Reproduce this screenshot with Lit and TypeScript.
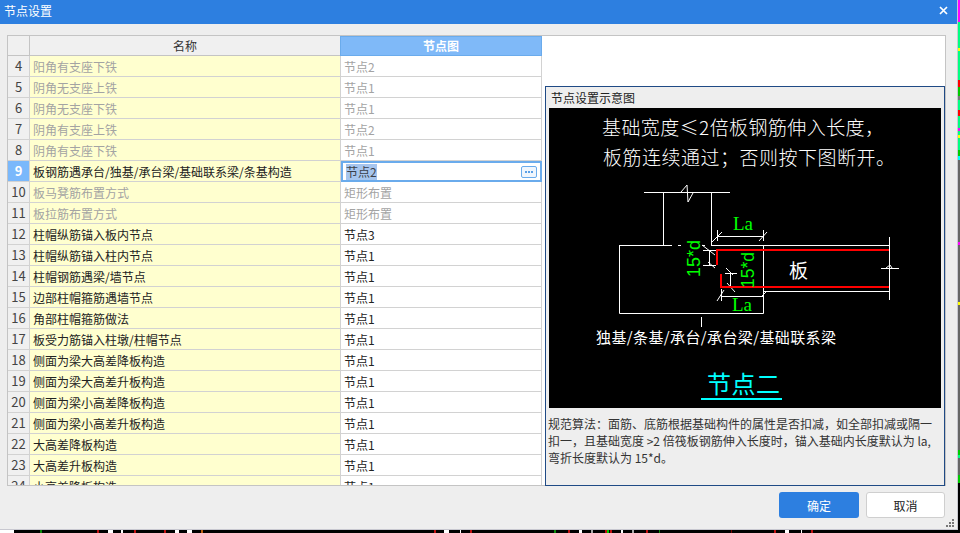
import { LitElement, html, css, svg } from 'lit';
import { customElement } from 'lit/decorators.js';

interface Row {
  no: number;
  name: string;
  node: string;
  off?: boolean;
}

const rows: Row[] = [
  { no: 4, name: '阳角有支座下铁', node: '节点2', off: true },
  { no: 5, name: '阴角无支座上铁', node: '节点1', off: true },
  { no: 6, name: '阴角无支座下铁', node: '节点1', off: true },
  { no: 7, name: '阴角有支座上铁', node: '节点2', off: true },
  { no: 8, name: '阴角有支座下铁', node: '节点1', off: true },
  { no: 9, name: '板钢筋遇承台/独基/承台梁/基础联系梁/条基构造', node: '节点2' },
  { no: 10, name: '板马凳筋布置方式', node: '矩形布置', off: true },
  { no: 11, name: '板拉筋布置方式', node: '矩形布置', off: true },
  { no: 12, name: '柱帽纵筋锚入板内节点', node: '节点3' },
  { no: 13, name: '柱帽纵筋锚入柱内节点', node: '节点1' },
  { no: 14, name: '柱帽钢筋遇梁/墙节点', node: '节点1' },
  { no: 15, name: '边部柱帽箍筋遇墙节点', node: '节点1' },
  { no: 16, name: '角部柱帽箍筋做法', node: '节点1' },
  { no: 17, name: '板受力筋锚入柱墩/柱帽节点', node: '节点1' },
  { no: 18, name: '侧面为梁大高差降板构造', node: '节点1' },
  { no: 19, name: '侧面为梁大高差升板构造', node: '节点1' },
  { no: 20, name: '侧面为梁小高差降板构造', node: '节点1' },
  { no: 21, name: '侧面为梁小高差升板构造', node: '节点1' },
  { no: 22, name: '大高差降板构造', node: '节点1' },
  { no: 23, name: '大高差升板构造', node: '节点1' },
  { no: 24, name: '小高差降板构造', node: '节点1' },
];

const SELECTED = 9;

// specks of the CAD window showing behind the dialog: x, width, colour
const bottomSpecks: [number, number, string][] = [
  [40, 2, '#0a8a0a'], [97, 2, '#c01010'], [108, 5, '#fff'], [121, 2, '#fff'], [134, 2, '#c01010'],
  [164, 2, '#c01010'], [175, 4, '#fff'], [187, 5, '#fff'], [201, 2, '#c06010'], [434, 2, '#c01010'],
  [444, 5, '#fff'], [460, 1, '#fff'], [470, 2, '#c01010'], [554, 2, '#0a8a0a'], [568, 2, '#c01010'],
  [579, 3, '#fff'], [591, 2, '#aaa'], [605, 2, '#c01010'], [607, 2, '#0c0'], [610, 2, '#c01010'],
  [621, 2, '#fff'], [632, 2, '#aaa'], [646, 2, '#c01010'], [659, 1, '#0a8a0a'], [731, 1, '#700'],
  [774, 2, '#c01010'], [785, 4, '#fff'], [801, 1, '#fff'], [811, 2, '#c01010'],
];

// y, height, colour down the right edge
const rightSpecks: [number, number, string][] = [
  [0, 22, '#f0f'], [22, 26, '#00ff80'], [48, 3, '#ff0'], [51, 29, '#00ff80'], [80, 7, '#f00'],
  [87, 9, '#0c0'], [96, 4, '#777'], [100, 10, '#00ff80'], [110, 6, '#f00'], [116, 12, '#00ff80'],
  [128, 3, '#f0f'], [131, 4, '#00ff80'], [135, 3, '#ff0'], [138, 12, '#00ff80'], [150, 6, '#0c0'],
  [156, 4, '#0ff'], [160, 82, '#666'], [242, 3, '#f0f'], [245, 57, '#666'], [302, 3, '#ff0'],
  [305, 145, '#666'], [450, 5, '#0c0'], [455, 3, '#00ff80'], [458, 17, '#666'], [475, 8, '#0c0'],
  [483, 50, '#000'],
];

// diagram lines in page coordinates, the viewBox shifts them into the picture
const whiteLines = [
  'M644 192.5H730', 'M663.5 192V245', 'M711.5 192V245', 'M681 192L687 185L688 202L693 193',
  'M619.5 245.5V313.5H763.5V245', 'M619 245.5H672', 'M678 245.5H681', 'M702 245.5H705',
  'M711 245.5H889', 'M763 291.5H889', 'M889.5 237V300', 'M881 268.5H899', 'M886 268L890 265L892 268',
  'M717.5 230V241', 'M717 236.5H764', 'M763.5 230V241', 'M712 242L722 232', 'M759 241L767 232',
  'M709.5 250V265', 'M703 250.5H716', 'M703 265.5H716', 'M702 245L715 255', 'M708 262L715 268',
  'M730.5 273V287', 'M725 273.5H737', 'M726 268L733 275', 'M727 283L735 292',
  'M721.5 289V301', 'M721 296.5H764', 'M717 301L724 290', 'M762 296L767 291',
  'M701.5 317V327',
];

@customElement('app-root')
export class AppRoot extends LitElement {
  private renderDiagram() {
    return html`
      <svg class="diagram" width="392" height="300" viewBox="549 108 392 300">
        <text class="head" x="602" y="135" textLength="282">基础宽度≤2倍板钢筋伸入长度，</text>
        <text class="head" x="603" y="165" textLength="292">板筋连续通过；否则按下图断开。</text>
        ${whiteLines.map((d) => svg`<path d=${d} class="white" />`)}
        <path d="M889 250H717V265" class="red" />
        <path d="M721 274V287H889" class="red" />
        <text class="la" x="733" y="230">La</text>
        <text class="la" x="732" y="311">La</text>
        <text class="dim" transform="translate(700 277) rotate(-90)" textLength="37" lengthAdjust="spacingAndGlyphs">15*d</text>
        <text class="dim" transform="translate(754 288) rotate(-90)" textLength="36" lengthAdjust="spacingAndGlyphs">15*d</text>
        <text class="ban" x="789" y="278">板</text>
        <text class="kinds" x="596" y="343" textLength="240">独基/条基/承台/承台梁/基础联系梁</text>
        <text class="node" x="707" y="393" textLength="73">节点二</text>
        <rect x="701" y="398" width="81" height="2" fill="#0ff" />
      </svg>
    `;
  }

  render() {
    return html`
      <svg class="behind" width="960" height="533">
        <rect x="0" y="530" width="14" height="3" fill="#fff" />
        <rect x="14" y="530" width="946" height="3" fill="#000" />
        ${bottomSpecks.map(([x, w, c]) => svg`<rect x=${x} y="530" width=${w} height="3" fill=${c} />`)}
        ${rightSpecks.map(([y, h, c]) => svg`<rect x="958" y=${y} width="2" height=${h} fill=${c} />`)}
      </svg>
      <div class="window">
        <div class="titlebar">
          <span>节点设置</span>
          <svg width="9" height="9" viewBox="0 0 9 9" class="close">
            <path d="M1 1L8 8M8 1L1 8" stroke="#fff" stroke-width="1.7" />
          </svg>
        </div>
        <div class="content">
          <div class="panel">
            <div class="grid">
              <div class="cell corner"></div>
              <div class="cell head-name">名称</div>
              <div class="cell head-node">节点图</div>
              ${rows.map((r) => this.renderRow(r))}
            </div>
            <div class="side">
              <div class="groupbox">
                <div class="group-title">节点设置示意图</div>
                ${this.renderDiagram()}
                <div class="desc">
                  <div>规范算法：面筋、底筋根据基础构件的属性是否扣减，如全部扣减或隔一</div>
                  <div>扣一，且基础宽度 &gt;2 倍筏板钢筋伸入长度时，锚入基础内长度默认为 la,</div>
                  <div>弯折长度默认为 15*d。</div>
                </div>
              </div>
            </div>
          </div>
        </div>
        <div class="footer">
          <button class="ok">确定</button>
          <button class="cancel">取消</button>
        </div>
        <svg class="grip" width="11" height="9" viewBox="0 0 11 9">
          <path d="M7 0h2v2H7zM4 3h2v2H4zM7 3h2v2H7zM1 6h2v2H1zM4 6h2v2H4zM7 6h2v2H7z" fill="#777" />
        </svg>
      </div>
    `;
  }

  private renderRow(r: Row) {
    const sel = r.no === SELECTED;
    return html`
      <div class="cell no ${sel ? 'no-sel' : ''}">${r.no}</div>
      <div class="cell name ${r.off ? 'off' : ''}">${r.name}</div>
      ${sel
        ? html`<div class="cell node editing">
            <span class="picked">${r.node}</span>
            <span class="more"><i></i><i></i><i></i></span>
          </div>`
        : html`<div class="cell node ${r.off ? 'off' : ''}">${r.node}</div>`}
    `;
  }

  static styles = css`
    :host {
      display: block;
      position: relative;
      width: 960px;
      height: 533px;
      overflow: hidden;
      background: #000;
      font-family: 'Noto Sans CJK SC', 'Liberation Sans', sans-serif;
      font-size: 12px;
    }

    .behind {
      position: absolute;
      left: 0;
      top: 0;
    }

    .window {
      position: relative;
      width: 957px;
      height: 529px;
      border-right: 1px solid #c8c8d0;
      border-bottom: 1px solid #c8c8d0;
      background: #eeeeee;
      display: flex;
      flex-direction: column;
    }

    .titlebar {
      box-sizing: border-box;
      height: 24px;
      flex: none;
      background: #2d7fe0;
      color: #fff;
      display: flex;
      align-items: center;
      justify-content: space-between;
      padding: 0 9px 4px 4px;
      font-size: 12px;
    }

    .content {
      padding: 11px 11px 0 7px;
      height: 451px;
      flex: none;
    }

    .panel {
      height: 451px;
      box-sizing: border-box;
      border: 1px solid #c4c4c4;
      background: #fff;
      display: flex;
    }

    .grid {
      display: grid;
      grid-template-columns: 22px 311px 201px;
      grid-auto-rows: 21px;
      grid-template-rows: 20px;
      width: 534px;
      height: 449px;
      overflow: hidden;
      flex: none;
    }

    .cell {
      box-sizing: border-box;
      border-right: 1px solid #d2d2d2;
      border-bottom: 1px solid #d2d2d2;
      display: flex;
      align-items: center;
      white-space: nowrap;
      color: #333;
      line-height: 20px;
    }

    .corner,
    .head-name {
      background: #f0f0f0;
      border-color: #c4c4c4;
    }

    .head-name {
      justify-content: center;
    }

    .head-node {
      margin-left: -1px;
      background: #7fb9f8;
      border: 1px solid #6aabec;
      color: #fff;
      font-weight: 700;
      justify-content: center;
    }

    .no {
      background: #f0f0f0;
      justify-content: center;
      font-size: 13px;
      color: #444;
    }

    .no-sel {
      background: #7ab8fb;
      color: #fff;
      font-weight: 700;
    }

    .name {
      background: #ffffcf;
      padding: 1px 0 0 3px;
      color: #222;
    }

    .node {
      padding: 1px 0 0 3px;
      color: #222;
    }

    .off {
      color: #a3a3a3;
    }

    .editing {
      border: 2px solid #6aabec;
      justify-content: space-between;
      padding: 0 3px 0 3px;
    }

    .picked {
      background: #a6c5ee;
      color: #3a3f48;
      line-height: 16px;
    }

    .more {
      box-sizing: border-box;
      width: 16px;
      height: 12px;
      border: 1px solid #6aabec;
      border-radius: 2px;
      background: #f0f6fd;
      display: flex;
      align-items: center;
      justify-content: center;
      gap: 1px;
    }

    .more i {
      width: 2px;
      height: 2px;
      background: #5a9fe6;
    }

    .side {
      flex: 1;
      min-width: 0;
      padding: 50px 0 0 3px;
      display: flex;
    }

    .groupbox {
      flex: 1;
      box-sizing: border-box;
      border: 1px solid #1f4a85;
      background: #eeeeee;
      height: 400px;
      padding: 0 3px;
    }

    .group-title {
      height: 21px;
      line-height: 21px;
      padding-left: 2px;
      color: #222;
    }

    .diagram {
      display: block;
      background: #000;
    }

    .diagram .white {
      stroke: #fff;
      stroke-width: 1;
      fill: none;
    }

    .diagram .red {
      stroke: #f00;
      stroke-width: 2;
      fill: none;
    }

    .diagram text {
      font-family: 'Noto Sans CJK SC', sans-serif;
      fill: #fff;
    }

    .diagram .head {
      font-size: 19px;
      font-weight: 300;
    }

    .diagram .la {
      font-family: 'Liberation Serif', serif;
      font-size: 19px;
      fill: #0f0;
    }

    .diagram .dim {
      font-family: 'Liberation Sans', sans-serif;
      font-size: 18px;
      fill: #0f0;
    }

    .diagram .ban {
      font-size: 19px;
    }

    .diagram .kinds {
      font-size: 15px;
    }

    .diagram .node {
      font-size: 24px;
      fill: #0ff;
    }

    .desc {
      margin: 7px 0 0 -1px;
      line-height: 17px;
      color: #333;
      white-space: nowrap;
    }

    .footer {
      flex: 1;
      display: flex;
      justify-content: flex-end;
      align-items: flex-start;
      gap: 7px;
      padding: 6px 12px 0 0;
    }

    button {
      font: inherit;
      width: 80px;
      height: 26px;
      padding: 0;
      border-radius: 3px;
    }

    .ok {
      background: #2d7fe0;
      border: none;
      color: #fff;
    }

    .cancel {
      width: 79px;
      background: #fff;
      border: 1px solid #cfcfcf;
      color: #222;
    }

    .grip {
      position: absolute;
      right: 1px;
      bottom: 1px;
    }
  `;
}

declare global {
  interface HTMLElementTagNameMap {
    'app-root': AppRoot;
  }
}
